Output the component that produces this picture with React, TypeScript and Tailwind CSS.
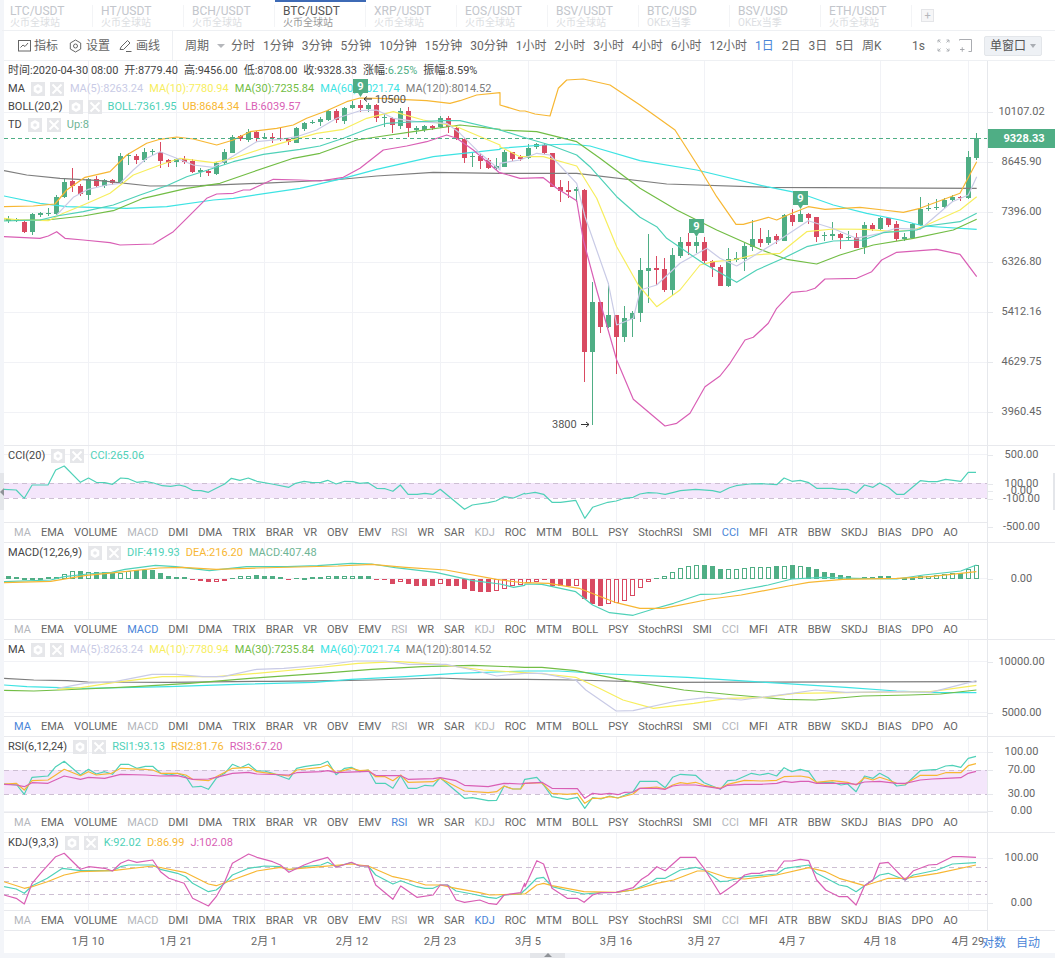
import React from "react";

const GREEN = "#4fae85";
const RED = "#d94a62";
const TEAL = "#4fd1b8";
const ORANGE = "#f7b733";
const MAGENTA = "#d95fb5";
const LAV = "#c9cbe6";
const YEL = "#f7ee5e";
const GRN = "#72bd45";
const CYAN = "#3de3e3";
const GRAY = "#7d7d7d";

const parse = (s: string) =>
  s.trim().split(/\s+/).map((p) => p.split(",").map(Number));
const mainPts = (a: string, b: string) =>
  [
    ...parse(a).map(([x, y]) => `${(x / 3).toFixed(1)},${(90 + y / 3).toFixed(1)}`),
    ...parse(b).map(([x, y]) => `${(500 + x / 3).toFixed(1)},${(130 + y / 3).toFixed(1)}`),
  ].join(" ");
const subPts = (a: string, b: string, base: number) =>
  [
    ...parse(a).map(([x, y]) => `${(x / 2.96).toFixed(1)},${(base + y / 3).toFixed(1)}`),
    ...parse(b).map(([x, y]) => `${(525 + x / 2.96).toFixed(1)},${(base + y / 3).toFixed(1)}`),
  ].join(" ");

const C1 = `g388,392,378,398 g388,392,385,396 r397,425,393,428 g373,425,368,435 g370,375,365,382 g370,373,355,378 g322,373,315,375 g275,322,265,325 r273,288,235,305 r287,312,283,318 g268,315,265,330 r268,288,258,292 g271,288,268,295 r270,280,266,284 g198,280,190,282 g194,197,188,225 r198,209,192,222 g187,210,175,215 g184,187,178,195 r187,212,155,233 r210,219,207,230 g208,216,203,232 r208,216,198,222 r214,245,208,250 g241,245,235,262 r242,250,238,258 g220,252,215,256 g185,220,178,224 g140,188,136,190 r139,148,135,152 g125,150,118,155 r125,145,122,155 g141,144,130,148 r141,145,128,160 r143,148,115,152 r148,157,143,165 g115,158,112,160 g100,118,95,124 g95,100,90,103 g88,95,82,108 g63,90,60,92 r63,90,58,100 g55,92,50,102 g44,55,33,58 r45,55,30,65 g46,56,40,65 r45,85,42,95 g82,85,70,112 r85,105,82,130 g62,108,55,118 r62,115,52,142 g115,119,108,132 g108,120,104,125 r108,113,105,120 g83,112,78,115 r83,112,78,128 r113,147,110,150 r147,203,143,218 g198,201,188,230 r198,212,190,238 r210,234,205,238 g228,234,205,240`;
const C2 = `g65,110,60,112 r67,87,65,93 r80,87,75,92 g53,85,42,87 g42,52,38,58 r45,70,40,73 r70,170,68,172 r170,183,150,215 r181,186,152,203 g178,184,172,215 r180,665,178,755 g517,665,455,885 r517,590,515,608 g556,590,458,595 r556,620,555,733 g565,620,527,635 g550,567,543,620 g420,550,385,575 g414,422,312,520 r414,419,378,465 r418,480,385,487 g376,480,355,495 g337,378,322,385 r337,347,308,375 g335,347,320,368 r337,392,322,400 r392,412,390,442 r412,467,405,467 g388,467,355,470 g385,390,367,395 g348,386,340,422 g328,352,270,362 r328,340,293,352 g320,340,300,345 r319,331,312,343 g255,332,253,333 r256,275,238,288 g252,275,240,277 r253,263,250,282 r262,320,260,335 g315,319,305,332 g313,317,275,330 r313,323,310,358 g320,323,302,332 r320,353,310,355 g286,352,275,372 r286,297,280,302 g265,296,260,300 r265,285,263,290 r283,327,272,332 g322,327,310,332 g283,325,280,327 g236,285,202,288 g233,236,220,244 g230,233,208,240 g209,231,205,233 g201,210,196,216 r200,205,198,214 g82,204,63,206 g25,83,10,90`;

const candles = [
  ...C1.split(" ").map((s) => ({ s, base: 90 })),
  ...C2.split(" ").map((s) => ({ s, base: 130 })),
].map(({ s, base }, i) => {
  const [t, b, h, l] = s.slice(1).split(",").map(Number);
  const y = (v: number) => Math.round(base + v / 3);
  return { i, c: s[0] === "g" ? GREEN : RED, t: y(t), b: y(b), h: y(h), l: y(l) };
});

const mainLines: [string, string, string][] = [
  [GRAY,
    "12,242 80,255 180,265 300,272 450,288 600,287 780,280 1000,270 1130,258 1300,247 1500,250",
    "0,130 230,130 500,162 800,172 1430,175"],
  [CYAN,
    "12,318 120,340 200,350 380,355 500,350 640,330 700,325 900,295 1030,265 1130,238 1300,200 1500,178",
    "0,55 130,45 210,42 270,48 420,92 590,120 800,170 900,190 1000,225 1100,250 1200,270 1270,288 1430,298"],
  [GRN,
    "12,390 140,390 250,378 340,362 430,325 560,295 660,280 760,245 880,205 960,190 1070,150 1150,138 1240,125 1380,105 1500,118",
    "0,0 110,5 230,35 300,85 420,175 530,240 650,300 780,358 860,388 950,402 1020,375 1120,345 1240,325 1360,300 1430,268"],
  [YEL,
    "12,385 60,390 145,392 190,370 250,345 330,310 400,255 480,225 540,205 640,218 700,205 790,175 860,155 950,130 1030,118 1100,85 1180,65 1270,90 1370,110 1500,165",
    "0,50 60,80 130,80 230,108 290,205 350,350 415,465 470,530 540,480 600,405 640,395 700,390 760,375 840,370 920,305 1000,297 1100,298 1180,305 1240,300 1280,285 1380,240 1430,200"],
  [LAV,
    "170,375 220,322 265,298 320,285 360,280 400,240 440,205 480,185 530,205 580,225 640,232 680,210 720,185 770,155 840,148 890,140 950,120 1010,85 1080,62 1130,60 1180,85 1250,95 1340,100 1380,130 1440,190 1500,240",
    "0,100 60,90 110,70 150,75 230,160 255,260 325,460 350,585 400,565 421,480 470,465 540,400 620,355 660,385 710,408 757,380 830,335 925,272 997,295 1069,325 1140,310 1189,295 1261,298 1357,215 1405,195 1430,140"],
  [TEAL,
    "12,393 120,390 170,378 250,365 340,345 420,315 500,287 560,260 640,235 700,215 790,193 900,178 960,168 1030,145 1100,118 1160,100 1230,96 1330,92 1380,92 1500,120",
    "0,0 80,25 150,45 230,75 270,110 350,200 420,262 470,290 500,325 610,400 710,457 770,420 850,385 920,350 1000,333 1090,330 1150,308 1250,300 1280,288 1380,275 1430,250"],
  [ORANGE,
    "12,350 100,348 165,342 200,300 255,262 330,245 380,195 440,160 480,148 530,141 580,147 650,165 700,150 750,125 830,115 880,105 920,85 980,62 1040,35 1080,24 1140,25 1200,28 1280,32 1350,40 1380,32 1430,15 1500,8",
    "0,-75 60,-57 75,-57 105,-48 150,-42 175,-125 200,-150 250,-153 330,-135 420,-75 525,0 605,125 650,200 708,283 730,283 805,262 830,270 870,252 925,230 975,238 1080,232 1150,240 1210,247 1260,235 1380,190 1430,95"],
  [MAGENTA,
    "12,440 120,445 145,438 170,425 195,445 250,450 330,458 360,465 460,462 520,425 560,385 620,325 650,312 700,310 730,300 750,300 820,268 900,270 960,273 1030,262 1080,235 1150,180 1220,168 1280,155 1340,135 1370,145 1420,180 1500,250",
    "0,128 60,145 130,143 170,175 230,212 250,330 290,480 350,690 400,808 495,888 530,880 570,850 615,770 660,738 690,700 735,630 760,622 805,580 830,535 875,487 920,483 945,475 975,447 1070,445 1115,425 1145,390 1190,367 1310,358 1380,373 1430,440"],
];

const macdBars = `G8 G5 g3 g4 g4 g5 g7 g14 g23 G23 g22 G20 G20 G18 g18 g25 G28 G26 G26 G18 G10 G7 G5 R3 R7 R9 r8 r6 G2 g8 g10 G11 G9 G8 G6 R3 G2 g4 g5 g7 g10 G8 g8 g10 G8 G8 R2 R4 R14 r10 R16 R20 R22 R22 r14 R20 R22 R30 R35 R38 R40 r36 r30 r22 r18 r12 r8 R4 R20 R22 R22 r22 R60 R75 R80 r75 r72 r65 r50 r28 r10 G3 g8 g22 g33 g40 g42 G41 G38 G30 g30 g30 g33 g35 g35 g36 G38 g40 G41 g40 G37 G30 G22 G18 G13 G10 G3 g5 g7 G9 G8 G3 g3 g4 g8 g10 g13 g16 g18 G18 g30 g42`
  .split(" ")
  .map((s, i) => {
    const v = Math.max(1, Math.round(Number(s.slice(1)) / 3));
    const up = s[0].toLowerCase() === "g";
    return { i, up, solid: s[0] === s[0].toUpperCase(), v };
  });

const GRID_X = [88, 176, 264, 352, 440, 528, 616, 704, 792, 880, 968];
const TABS = "MA EMA VOLUME MACD DMI DMA TRIX BRAR VR OBV EMV RSI WR SAR KDJ ROC MTM BOLL PSY StochRSI SMI CCI MFI ATR BBW SKDJ BIAS DPO AO".split(" ");
const FADED = ["MA", "MACD", "RSI", "KDJ", "CCI"];

function Grid({ top, h, ys }: { top: number; h: number; ys: number[] }) {
  return (
    <svg className="absolute inset-0" width="983" height={h} viewBox={`4 ${top} 983 ${h}`}>
      <g stroke="#f1f2f6" strokeWidth="1" shapeRendering="crispEdges">
        {GRID_X.map((x) => (
          <line key={x} x1={x + 0.5} x2={x + 0.5} y1={top} y2={top + h} />
        ))}
        {ys.map((y) => (
          <line key={y} x1={4} x2={987} y1={y + 0.5} y2={y + 0.5} />
        ))}
      </g>
    </svg>
  );
}

function Line({ c, p, w = 1.2 }: { c: string; p: string; w?: number }) {
  return <polyline points={p} fill="none" stroke={c} strokeWidth={w} strokeLinejoin="round" />;
}

function Dash({ y, c = "#cdbfd3" }: { y: number; c?: string }) {
  return <line x1={4} x2={987} y1={y + 0.5} y2={y + 0.5} stroke={c} strokeDasharray="5 4" shapeRendering="crispEdges" />;
}

function MiniBtns() {
  return (
    <span className="flex items-center gap-[5px] mx-[6px]">
      <span className="w-[14px] h-[14px] bg-[#e6e7ea] flex items-center justify-center">
        <svg width="12" height="12" viewBox="0 0 12 12">
          <path d="M6 1l4.3 2.5v5L6 11 1.700 8.500v-5z" fill="#fff" />
          <circle cx="6" cy="6" r="1.800" fill="#e6e7ea" />
        </svg>
      </span>
      <span className="w-[14px] h-[14px] bg-[#e6e7ea] flex items-center justify-center">
        <svg width="12" height="12" viewBox="0 0 12 12">
          <path d="M1.500 1.500l9 9M10.500 1.500l-9 9" stroke="#fff" strokeWidth="2" />
        </svg>
      </span>
    </span>
  );
}

type V = [string, string];
function Legend({ name, vals, nudge }: { name: string; vals: V[]; nudge?: boolean }) {
  return (
    <div className={`relative flex items-center h-[18px] pl-1 text-[11px] text-[#444] whitespace-nowrap ${nudge ? "mt-px" : ""}`}>
      <span>{name}</span>
      <MiniBtns />
      <span className="flex gap-[6px]">
        {vals.map(([t, c]) => (
          <span key={t} style={{ color: c }}>{t}</span>
        ))}
      </span>
    </div>
  );
}

function IndicatorTabs({ active }: { active: string }) {
  return (
    <div className="relative h-5 shrink-0 border-t border-[#e8e9ed] flex items-center pt-px pl-[10px] gap-[10px] text-[11px] whitespace-nowrap bg-white">
      {TABS.map((t) => (
        <span
          key={t}
          className={t === active ? "text-[#4a85d8]" : FADED.includes(t) ? "text-[#b4b6bb]" : "text-[#666]"}
        >
          {t}
        </span>
      ))}
    </div>
  );
}

function Axis({ top, labels, children }: { top: number; labels: [number, string][]; children?: React.ReactNode }) {
  return (
    <div className="w-[68px] shrink-0 relative border-l border-[#e6e8ec] text-[11px] text-[#666]">
      {labels.map(([y, t]) => (
        <div key={t} className="absolute left-0 right-0 h-4 flex items-center" style={{ top: y - top - 8 }}>
          <span className="w-[5px] h-px bg-[#e6e8ec]" />
          <span className="w-[57px] text-center">{t}</span>
        </div>
      ))}
      {children}
    </div>
  );
}

function SubPanel({
  top, h, name, vals, active, labels, gridY, children,
}: {
  top: number; h: number; name: string; vals: V[]; active: string;
  labels: [number, string][]; gridY: number[]; children: React.ReactNode;
}) {
  return (
    <div className="flex shrink-0 border-b border-[#e8e9ed]" style={{ height: h }}>
      <div className="flex-1 relative flex flex-col">
        <Grid top={top} h={h - 21} ys={gridY} />
        <Legend name={name} vals={vals} nudge />
        <div className="flex-1" />
        <IndicatorTabs active={active} />
        <svg className="absolute inset-0" width="983" height={h - 21} viewBox={`4 ${top} 983 ${h - 21}`}>
          {children}
        </svg>
      </div>
      <Axis top={top} labels={labels} />
    </div>
  );
}

function Marker({ x, y }: { x: number; y: number }) {
  return (
    <g>
      <path d={`M${x} ${y}h15v14h-5l-2.500 4-2.500-4h-5z`} fill={GREEN} />
      <text x={x + 7.5} y={y + 11} textAnchor="middle" fontSize="11" fontWeight="700" fill="#fff">9</text>
    </g>
  );
}

const PAIRS: [string, string, boolean?][] = [
  ["LTC/USDT", "火币全球站"],
  ["HT/USDT", "火币全球站"],
  ["BCH/USDT", "火币全球站"],
  ["BTC/USDT", "火币全球站", true],
  ["XRP/USDT", "火币全球站"],
  ["EOS/USDT", "火币全球站"],
  ["BSV/USDT", "火币全球站"],
  ["BTC/USD", "OKEx当季"],
  ["BSV/USD", "OKEx当季"],
  ["ETH/USDT", "火币全球站"],
];
const PERIODS = "分时 1分钟 3分钟 5分钟 10分钟 15分钟 30分钟 1小时 2小时 3小时 4小时 6小时 12小时 1日 2日 3日 5日 周K".split(" ");
const DATES = "1月 10|1月 21|2月 1|2月 12|2月 23|3月 5|3月 16|3月 27|4月 7|4月 18|4月 29".split("|");
const MA_VALS: V[] = [
  ["MA(5):8263.24", LAV],
  ["MA(10):7780.94", YEL],
  ["MA(30):7235.84", GRN],
  ["MA(60):7021.74", CYAN],
  ["MA(120):8014.52", GRAY],
];

function MainChart() {
  return (
    <svg className="absolute inset-0" width="983" height="384" viewBox="4 61 983 384">
      {candles.map((k) => (
        <g key={k.i} fill={k.c} shapeRendering="crispEdges">
          <rect x={8 + 8 * k.i} y={k.h} width="1" height={Math.max(1, k.l - k.h)} />
          <rect x={6 + 8 * k.i} y={k.t} width="5" height={Math.max(1, k.b - k.t)} />
        </g>
      ))}
      {mainLines.map(([c, a, b]) => (
        <Line key={c} c={c} p={mainPts(a, b)} />
      ))}
      <line x1={4} x2={987} y1={138.5} y2={138.5} stroke={GREEN} strokeDasharray="4 3" shapeRendering="crispEdges" />
      <Marker x={353} y={79} />
      <Marker x={689} y={219} />
      <Marker x={793} y={191} />
      <text x={375} y={103} fontSize="11" fill="#555">10500</text>
      <path d="M372 99h-8m3-2.500l-3 2.500 3 2.500" stroke="#333" fill="none" />
      <text x={552} y={428} fontSize="11" fill="#555">3800</text>
      <path d="M581 424.500h8m-3-2.500l3 2.500-3 2.500" stroke="#333" fill="none" />
    </svg>
  );
}

export default function App() {
  return (
    <div className="w-[1055px] h-[958px] overflow-hidden relative bg-[#f3f5f9] pl-1 font-['Roboto','Noto_Sans_CJK_SC',sans-serif]">
      <div className="bg-white h-[953px] flex flex-col">
        {/* pair tabs */}
        <div className="h-[31px] shrink-0 border-b border-[#eef0f3] flex items-center -ml-[2px]">
          {PAIRS.map(([t, s, on]) => (
            <div key={t} className={`w-[91px] h-full pt-[3px] border-t-2 ${on ? "border-[#3d6ab5]" : "border-transparent"}`}>
              <div className="h-[22px] pl-2 border-r border-[#f3f4f6] whitespace-nowrap">
                <div className={`text-[12px] leading-[12px] ${on ? "text-[#555]" : "text-[#c3c6cc]"}`}>{t}</div>
                <div className={`text-[10px] leading-[11px] ${on ? "text-[#999]" : "text-[#dcdee2]"}`}>{s}</div>
              </div>
            </div>
          ))}
          <div className="ml-[9px] w-[13px] h-[13px] border border-[#e4e5e8] bg-[#f6f6f7] text-[#b5b7bb] text-[11px] leading-[11px] text-center">+</div>
        </div>

        {/* toolbar */}
        <div className="h-[30px] shrink-0 border-b border-[#eef0f3] flex items-center text-[12px] text-[#666] whitespace-nowrap pl-[14px] pr-[13px]">
          <span className="flex items-center gap-[3px]">
            <svg width="13" height="13" viewBox="0 0 13 13" fill="none" stroke="#666">
              <rect x=".5" y="1.500" width="12" height="10.500" />
              <path d="M2.500 8.500l2.500-2.500 2 1.500 3-3.500" />
            </svg>
            指标
          </span>
          <span className="flex items-center gap-1 ml-[11px]">
            <svg width="13" height="14" viewBox="0 0 13 14" fill="none" stroke="#666">
              <path d="M6.500 1l5.200 3v6l-5.200 3-5.200-3V4z" />
              <circle cx="6.500" cy="7" r="2" />
            </svg>
            设置
          </span>
          <span className="flex items-center gap-1 ml-[9px]">
            <svg width="13" height="13" viewBox="0 0 13 13" fill="none" stroke="#666">
              <path d="M1 10.500L2 8 8.500 1.500l2.500 2.500L4.500 10.500z" />
              <path d="M7 12.500h5.500" />
            </svg>
            画线
          </span>
          <span className="ml-3 h-full border-l border-[#eef0f3]" />
          <span className="ml-3">周期</span>
          <span className="ml-[8px] w-0 h-0 border-x-[4px] border-x-transparent border-t-[4px] border-t-[#b5b7bb]" />
          <span className="ml-[6px] flex gap-2">
            {PERIODS.map((p) => (
              <span key={p} className={p === "1日" ? "text-[#4a85d8]" : ""}>{p}</span>
            ))}
          </span>
          <span className="ml-auto">1s</span>
          <svg className="ml-3" width="13" height="13" viewBox="0 0 13 13" fill="none" stroke="#a8abb0" strokeWidth=".9">
            <path d="M1 3.500V1h2.500M1 1l2.500 2.500M12 3.500V1H9.500M12 1L9.500 3.500M1 9.500V12h2.500M1 12l2.500-2.500M12 9.500V12H9.500M12 12L9.500 9.500" />
          </svg>
          <svg className="ml-[9px]" width="13" height="14" viewBox="0 0 13 14" fill="none" stroke="#a0a3a8" strokeWidth=".9">
            <path d="M.5 1.500V.5h12v12H9.500M1 10.500h4.500M3.250 8.250v4.500" />
          </svg>
          <span className="ml-3 w-[58px] h-[20px] bg-[#eef1f5] border border-[#e3e6ea] rounded-[2px] flex items-center pl-[5px] gap-[4px] text-[#555]">
            单窗口
            <span className="w-0 h-0 border-x-[3px] border-x-transparent border-t-[4px] border-t-[#a9adb3]" />
          </span>
        </div>

        {/* main panel */}
        <div className="h-[385px] shrink-0 flex border-b border-[#e8e9ed]">
          <div className="flex-1 relative pt-[1px]">
            <Grid top={61} h={384} ys={[112, 162, 212, 262, 312, 362, 412]} />
            <div className="relative h-[18px] flex items-center gap-[6px] pl-1 text-[11px] text-[#444] whitespace-nowrap">
              <span>时间:2020-04-30 08:00</span>
              <span>开:8779.40</span>
              <span>高:9456.00</span>
              <span>低:8708.00</span>
              <span>收:9328.33</span>
              <span>涨幅:<span className="text-[#4fae85]">6.25%</span></span>
              <span>振幅:8.59%</span>
            </div>
            <Legend name="MA" vals={MA_VALS} />
            <Legend name="BOLL(20,2)" vals={[["BOLL:7361.95", TEAL], ["UB:8684.34", ORANGE], ["LB:6039.57", MAGENTA]]} />
            <Legend name="TD" vals={[["Up:8", "#6fb596"]]} />
            <MainChart />
          </div>
          <Axis
            top={61}
            labels={[[112, "10107.02"], [162, "8645.90"], [212, "7396.00"], [262, "6326.80"], [312, "5412.16"], [362, "4629.75"], [412, "3960.45"]]}
          >
            <div className="absolute top-[68px] left-0 right-0 h-[19px] bg-[#4fae85] text-white font-bold text-[11px] leading-[19px] text-center pl-[5px]">
              9328.33
            </div>
          </Axis>
        </div>

        <SubPanel
          top={446} h={97} name="CCI(20)" active="CCI" vals={[["CCI:265.06", TEAL]]}
          labels={[[455, "500.00"], [484, "100.00"], [491, "0.00"], [499, "-100.00"], [527, "-500.00"]]}
          gridY={[454, 490]}
        >
          <rect x={4} y={483} width={983} height={15} fill="#f4e6fb" />
          <Dash y={483} />
          <Dash y={498} />
          <Line c={TEAL} p={subPts(
            "10,148 48,150 72,175 95,135 142,135 165,90 190,78 238,127 262,114 285,127 310,128 333,133 357,114 380,116 405,127 430,124 455,129 480,137 505,139 530,135 550,140 570,151 595,152 617,157 640,145 665,132 685,115 710,121 735,114 760,124 805,132 855,142 875,130 900,124 925,128 950,127 970,121 995,132 1020,124 1045,125 1065,130 1090,128 1115,145 1140,146 1163,154 1185,135 1208,163 1235,163 1258,160 1282,163 1303,148 1375,208 1398,195 1445,188 1468,183 1492,170 1520,174 1553,160",
            "0,162 30,157 55,163 80,187 105,187 150,181 177,235 200,202 245,187 270,183 295,175 320,172 340,162 365,158 390,159 415,163 440,157 460,152 505,148 555,152 578,157 605,143 625,137 665,132 700,131 745,134 767,114 790,124 815,121 840,128 863,145 910,145 930,148 955,148 980,160 1005,135 1030,142 1050,129 1075,142 1100,163 1122,163 1170,122 1195,125 1220,125 1245,118 1290,124 1312,97 1335,97", 440)} />
        </SubPanel>

        <SubPanel
          top={543} h={97} name="MACD(12,26,9)" active="MACD"
          vals={[["DIF:419.93", TEAL], ["DEA:216.20", ORANGE], ["MACD:407.48", "#6fb596"]]}
          labels={[[579, "0.00"]]}
          gridY={[578]}
        >
          <g shapeRendering="crispEdges">
            {macdBars.map((b) => {
              const c = b.up ? GREEN : RED;
              const y = b.up ? 579 - b.v : 579;
              return b.solid ? (
                <rect key={b.i} x={6 + 8 * b.i} y={y} width="5" height={b.v} fill={c} />
              ) : (
                <rect key={b.i} x={6.5 + 8 * b.i} y={y + 0.5} width="4" height={Math.max(1, b.v - 1)} fill="none" stroke={c} />
              );
            })}
          </g>
          <Line c={TEAL} p={subPts(
            "10,425 150,420 190,410 260,402 330,397 370,388 460,376 520,380 620,392 730,380 850,380 940,377 1040,370 1100,372 1170,383 1290,397 1400,422 1480,432 1520,442 1553,436",
            "0,432 50,433 150,455 200,495 250,518 320,526 380,507 440,490 520,463 580,462 640,450 720,435 790,417 880,412 980,415 1100,417 1180,405 1290,393 1336,375", 440)} />
          <Line c={ORANGE} p={subPts(
            "10,428 150,424 250,407 340,398 470,384 540,382 640,388 760,384 880,381 1000,378 1100,373 1200,382 1320,390 1470,418 1553,429",
            "0,428 70,430 160,445 270,488 340,505 410,505 550,477 640,465 780,438 840,427 940,418 1100,415 1200,410 1336,395", 440)} />
        </SubPanel>

        <SubPanel
          top={640} h={97} name="MA" active="MA" vals={MA_VALS}
          labels={[[662, "10000.00"], [713, "5000.00"]]}
          gridY={[661, 712]}
        >
          <Line c={GRAY} p={subPts("12,115 100,120 200,122 260,126 500,127 800,124 1000,122 1100,120 1300,114 1400,118 1553,118", "0,118 150,120 400,127 1336,125", 640)} />
          <Line c={CYAN} p={subPts("12,135 80,140 250,145 500,140 700,133 930,127 1040,118 1200,110 1350,100 1553,93", "0,93 100,93 250,102 480,112 680,125 950,142 1100,153 1230,158 1336,158", 640)} />
          <Line c={GRN} p={subPts("12,151 100,153 250,147 400,140 560,130 780,112 950,100 1100,88 1250,80 1400,76 1553,82", "0,82 50,82 150,92 300,122 470,150 620,165 770,178 860,180 1000,168 1140,165 1230,162 1336,150", 640)} />
          <Line c={YEL} p={subPts("170,148 240,143 340,127 480,110 640,110 760,100 900,87 1060,70 1180,65 1300,73 1430,90 1553,98", "0,98 60,102 150,112 220,145 290,180 380,205 500,190 600,175 700,173 800,160 1000,157 1200,155 1336,136", 640)} />
          <Line c={LAV} p={subPts("170,145 250,130 340,125 450,103 520,103 600,110 660,110 760,88 840,85 960,75 1050,63 1140,63 1210,73 1320,73 1400,90 1470,108 1553,100", "0,100 50,100 150,120 180,150 270,213 320,212 450,183 540,172 640,180 790,160 860,150 950,157 1100,155 1200,157 1336,122", 640)} />
        </SubPanel>

        <SubPanel
          top={737} h={96} name="RSI(6,12,24)" active="RSI"
          vals={[["RSI1:93.13", TEAL], ["RSI2:81.76", ORANGE], ["RSI3:67.20", MAGENTA]]}
          labels={[[752, "100.00"], [770, "70.00"], [794, "30.00"], [811, "0.00"]]}
          gridY={[752, 811]}
        >
          <rect x={4} y={770} width={983} height={24} fill="#f4e6fb" />
          <Dash y={770} />
          <Dash y={794} />
          <Line c={TEAL} p={subPts(
            "12,132 50,135 72,163 95,112 142,108 165,80 190,64 238,105 262,88 285,102 310,95 333,103 357,73 380,73 405,85 430,79 452,79 475,100 500,105 525,100 550,110 570,141 595,139 617,148 640,115 665,100 688,73 712,83 736,72 760,93 783,93 807,100 855,118 878,85 900,80 925,76 950,73 970,64 995,104 1020,85 1040,82 1065,95 1090,90 1112,130 1140,130 1163,145 1186,107 1208,145 1234,145 1258,136 1282,138 1303,113 1375,175 1398,173 1445,182 1470,181 1492,138 1518,147 1541,147 1553,118",
            "0,118 35,112 55,135 80,170 125,178 155,172 177,205 200,173 225,177 250,168 275,174 320,155 340,124 390,124 415,143 437,112 460,103 505,106 530,128 578,148 600,122 625,120 670,100 695,105 720,100 745,108 767,83 790,95 815,88 840,95 863,128 910,127 935,135 955,132 980,155 1005,108 1030,115 1050,100 1075,113 1100,138 1125,135 1170,92 1220,88 1245,78 1265,76 1290,82 1312,55 1335,49", 740)} />
          <Line c={ORANGE} p={subPts(
            "12,132 48,130 72,150 95,122 142,120 165,105 190,88 238,107 262,95 285,105 330,100 357,85 430,88 452,90 475,100 525,100 550,105 570,118 617,122 640,110 688,85 736,82 760,95 855,108 878,90 950,82 970,75 995,98 1040,85 1065,92 1090,90 1112,110 1140,110 1163,122 1186,105 1208,127 1282,125 1303,115 1375,153 1445,158 1470,155 1492,138 1518,147 1541,147 1553,130",
            "0,130 50,128 80,160 125,163 155,160 177,190 200,175 225,175 250,170 275,174 320,162 340,145 390,141 415,147 437,135 460,128 480,131 505,127 530,136 578,145 600,133 650,121 700,123 745,121 767,110 815,108 840,112 863,127 910,122 955,127 980,135 1005,113 1030,120 1050,112 1075,120 1100,130 1125,132 1170,106 1220,106 1245,98 1290,98 1312,77 1335,71", 740)} />
          <Line c={MAGENTA} p={subPts(
            "12,133 48,135 72,140 95,128 142,130 190,108 238,118 262,112 310,115 357,103 430,105 475,108 525,107 570,118 617,117 640,112 688,100 736,97 760,102 855,105 878,98 950,95 970,92 995,98 1090,94 1112,106 1140,107 1186,107 1208,118 1282,116 1303,113 1350,122 1375,136 1445,140 1492,130 1541,132 1553,130",
            "0,130 50,127 80,145 155,146 177,175 200,160 225,163 250,160 275,164 295,157 320,156 340,145 390,145 415,148 437,138 460,135 505,135 578,146 600,136 650,133 700,133 745,130 767,124 790,127 815,124 840,124 863,130 955,130 980,133 1005,126 1050,124 1100,130 1125,130 1170,120 1205,117 1245,115 1290,113 1312,100 1335,94", 740)} />
        </SubPanel>

        <SubPanel
          top={833} h={98} name="KDJ(9,3,3)" active="KDJ"
          vals={[["K:92.02", TEAL], ["D:86.99", ORANGE], ["J:102.08", MAGENTA]]}
          labels={[[858, "100.00"], [903, "0.00"]]}
          gridY={[858, 903]}
        >
          <Dash y={867} />
          <Dash y={881} />
          <Dash y={894} />
          <Line c={TEAL} p={subPts(
            "12,440 48,447 72,460 95,437 140,415 185,385 238,392 285,392 333,392 357,380 380,375 452,375 475,388 525,400 550,410 570,430 617,455 640,450 665,430 688,405 736,385 783,378 830,380 855,390 900,380 950,375 970,367 995,380 1040,368 1065,378 1090,378 1112,405 1163,432 1186,422 1234,440 1258,445 1282,445 1303,435 1325,435 1350,453 1398,462 1445,472 1470,475 1492,465 1541,462 1553,450",
            "0,450 35,415 55,412 80,440 120,450 175,462 225,458 270,457 320,450 370,428 390,415 415,415 460,390 505,382 530,390 578,425 600,423 650,410 745,402 770,385 840,375 863,400 930,435 955,440 980,455 1005,437 1050,405 1075,400 1125,420 1150,405 1220,390 1265,372 1335,368", 740)} />
          <Line c={ORANGE} p={subPts(
            "12,425 72,445 95,440 140,425 190,405 238,395 333,392 452,378 550,398 617,432 640,437 665,428 760,393 830,382 855,388 950,380 1040,372 1090,378 1163,410 1210,420 1260,435 1303,435 1350,445 1420,458 1450,465 1541,462 1553,462",
            "0,462 35,435 55,430 80,437 175,455 270,457 320,450 390,430 440,420 510,393 540,393 600,413 650,417 745,405 840,383 890,395 930,415 1005,437 1075,415 1125,415 1220,400 1335,375", 740)} />
          <Line c={MAGENTA} p={subPts(
            "12,465 48,475 72,492 95,430 120,400 165,350 190,340 238,388 262,380 310,385 333,393 357,370 380,360 405,367 452,360 475,395 500,415 545,430 570,475 617,498 640,470 665,425 688,370 736,342 760,352 807,365 830,375 855,397 900,375 925,365 970,352 995,382 1040,367 1065,378 1090,378 1112,435 1163,478 1186,438 1234,472 1282,465 1303,435 1325,435 1350,480 1375,487 1420,480 1445,490 1470,493 1492,465 1541,458 1553,430",
            "0,440 35,362 55,372 80,445 125,475 155,475 175,487 200,465 225,458 270,457 320,443 345,418 365,405 390,380 415,392 460,352 505,352 530,385 578,463 625,430 650,405 670,400 695,400 720,392 745,393 767,363 790,363 815,358 840,362 863,420 890,450 930,470 955,470 980,495 1005,437 1030,420 1050,370 1075,367 1125,420 1150,392 1195,375 1220,373 1265,350 1290,350 1335,352", 740)} />
        </SubPanel>

        {/* time axis */}
        <div className="h-[22px] shrink-0 relative flex items-center pl-10 text-[11px] text-[#666] whitespace-nowrap">
          {DATES.map((d) => (
            <span key={d} className="w-[88px] text-center">{d}</span>
          ))}
          <span className="absolute left-[978px] top-[3px] flex gap-[10px] text-[12px] text-[#4a85d8]">
            <span>对数</span>
            <span>自动</span>
          </span>
        </div>
      </div>

      {/* collapse handles */}
      <div className="absolute left-0 top-[473px] w-1 h-[37px] bg-[#e4e6ea] flex items-center">
        <span className="w-0 h-0 border-y-[4px] border-y-transparent border-r-[4px] border-r-[#8f9398]" />
      </div>
      <div className="absolute left-[530px] top-[953px] w-[35px] h-[5px] bg-[#e4e6ea] flex justify-center">
        <span className="w-0 h-0 border-x-[4px] border-x-transparent border-b-[4px] border-b-[#8f9398]" />
      </div>
      <div className="absolute right-0 top-[473px] w-[2px] h-[37px] bg-[#e4e6ea]" />
    </div>
  );
}
